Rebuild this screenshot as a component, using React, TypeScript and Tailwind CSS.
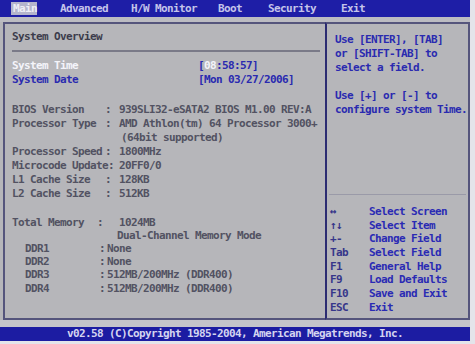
const menu = [
  { name: "Main", w: "w-[26px]", ml: "ml-[11px]" },
  { name: "Advanced", w: "w-[71px]", ml: "ml-[23px]" },
  { name: "H/W Monitor", w: "w-[87px]", ml: "" },
  { name: "Boot", w: "w-[50px]", ml: "" },
  { name: "Security", w: "w-[73px]", ml: "" },
  { name: "Exit", w: "w-[40px]", ml: "" },
];

const info = [
  { label: "BIOS Version", value: "939SLI32-eSATA2 BIOS M1.00 REV:A" },
  { label: "Processor Type", value: "AMD Athlon(tm) 64 Processor 3000+" },
  { label: "", value: "(64bit supported)" },
  { label: "Processor Speed", value: "1800MHz" },
  { label: "Microcode Update", value: "20FF0/0" },
  { label: "L1 Cache Size", value: "128KB" },
  { label: "L2 Cache Size", value: "512KB" },
];

const dimms = [
  { label: "DDR1", value: "None" },
  { label: "DDR2", value: "None" },
  { label: "DDR3", value: "512MB/200MHz (DDR400)" },
  { label: "DDR4", value: "512MB/200MHz (DDR400)" },
];

const keys = [
  { key: "↔", desc: "Select Screen" },
  { key: "↑↓", desc: "Select Item" },
  { key: "+-", desc: "Change Field" },
  { key: "Tab", desc: "Select Field" },
  { key: "F1", desc: "General Help" },
  { key: "F9", desc: "Load Defaults" },
  { key: "F10", desc: "Save and Exit" },
  { key: "ESC", desc: "Exit" },
];

const App = () => {
  return (
    <div
      className="w-[475px] h-[344px] bg-[#e4e4ea] overflow-hidden text-[11px] font-bold tracking-[-0.62px] whitespace-pre"
      style={{ fontFamily: '"DejaVu Sans Mono", "Liberation Mono", monospace' }}
    >
      <div className="w-[470px] h-[341px] bg-[#b6b6ba] flex flex-col">
        {/* menu bar */}
        <div className="h-[17px] bg-[#1e1ea6] flex items-center text-[#c4c4ea]">
          {menu.map((m, i) => (
            <span
              key={m.name}
              className={`${m.w} ${m.ml} leading-[13px] ${
                i === 0 ? "bg-[#b4b4cc] text-[#eeeef6] pl-[2px]" : ""
              }`}
            >
              {m.name}
            </span>
          ))}
        </div>
        <div className="h-[5px] bg-[#bcbcc2]" />

        <div className="h-[298px] ml-[3px] flex">
          {/* left panel */}
          <div className="w-[322px] border-l-2 border-t-2 border-b-2 border-[#55557c] pl-[7px] pt-[6px] text-[#525262]">
            <div className="h-[14px] leading-[14px] text-[#3c3c4c]">System Overview</div>
            <div className="h-[6px]" />
            <div className="h-[2px] mr-[5px] bg-[#7a7a88]" />
            <div className="h-[7px]" />

            <div className="h-[14px] leading-[14px] flex">
              <span className="w-[186px] text-[#f4f4fa]">System Time</span>
              <span className="text-[#2a2ab0]">
                [<span className="text-[#f4f4fa]">08</span>:58:57]
              </span>
            </div>
            <div className="h-[14px] leading-[14px] flex text-[#2a2ab0]">
              <span className="w-[186px]">System Date</span>
              <span>[Mon 03/27/2006]</span>
            </div>
            <div className="h-[16px]" />

            {info.map((r) =>
              r.label.length >= 16 ? (
                <div key={r.label} className="h-[14px] leading-[14px] flex">
                  <span className="w-[107px]">{r.label}:</span>
                  <span>{r.value}</span>
                </div>
              ) : (
                <div key={r.label + r.value} className="h-[14px] leading-[14px] flex">
                  <span className="w-[93px]">{r.label}</span>
                  <span className="w-[14px]">{r.label ? ":" : ""}</span>
                  <span className={r.label ? "" : "pl-[2px]"}>{r.value}</span>
                </div>
              )
            )}
            <div className="h-[14.7px]" />

            <div className="h-[13.2px] leading-[13.2px] flex">
              <span className="w-[85px]">Total Memory</span>
              <span className="w-[22px]">:</span>
              <span>1024MB</span>
            </div>
            <div className="h-[13.2px] leading-[13.2px] pl-[105px]">Dual-Channel Memory Mode</div>
            {dimms.map((d) => (
              <div key={d.label} className="h-[13.2px] leading-[13.2px] flex">
                <span className="w-[87px] pl-[13px]">{d.label}</span>
                <span className="w-[8px]">:</span>
                <span>{d.value}</span>
              </div>
            ))}
          </div>

          {/* right panel */}
          <div className="w-[145px] border-2 border-t-[#55557c] border-b-[#55557c] border-l-[#2c2c72] border-r-[#55557c] flex flex-col">
            <div className="pl-[8px] pt-[9px] text-[#2a2ab0] h-[170px]">
              <div className="h-[14px] leading-[14px]">Use [ENTER], [TAB]</div>
              <div className="h-[14px] leading-[14px]">or [SHIFT-TAB] to</div>
              <div className="h-[14px] leading-[14px]">select a field.</div>
              <div className="h-[14px]" />
              <div className="h-[14px] leading-[14px]">Use [+] or [-] to</div>
              <div className="h-[14px] leading-[14px]">configure system Time.</div>
            </div>
            <div className="h-[1px] mx-[2px] bg-[#9a9aa8]" />
            <div className="pt-[10px] pl-[3px]">
              {keys.map((k) => (
                <div key={k.desc} className="h-[13.7px] leading-[13.7px] flex">
                  <span className="w-[39px] text-[#36368a]">{k.key}</span>
                  <span className="text-[#2a2ab4]">{k.desc}</span>
                </div>
              ))}
            </div>
          </div>
        </div>

        <div className="h-[7px] bg-[#c4c4ca]" />
        {/* footer */}
        <div className="h-[14px] bg-[#1c1ca2] flex items-center justify-center text-[#d4d4f0] leading-[14px]">
          v02.58 (C)Copyright 1985-2004, American Megatrends, Inc.
        </div>
      </div>
    </div>
  );
};

export default App;
